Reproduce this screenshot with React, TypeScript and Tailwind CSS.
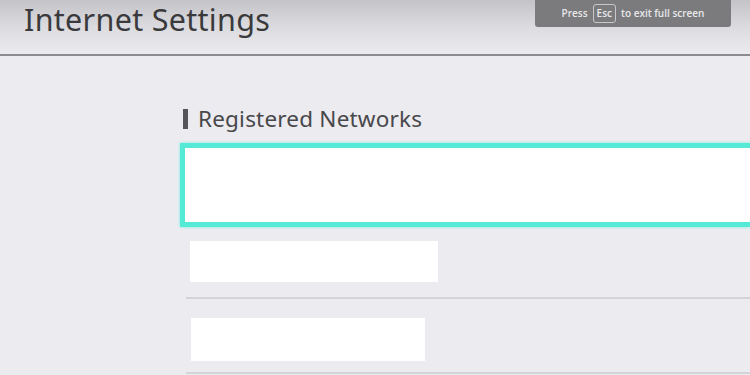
import React from "react";

export default function App() {
  return (
    <div className="relative w-[750px] h-[375px] overflow-hidden bg-[#ecebf0]" style={{ fontFamily: '"Open Sans", "Noto Sans", sans-serif' }}>
      <div className="h-[54px] bg-gradient-to-b from-[#c4c4c8] via-[#dcdce0] to-[#ebebee] flex items-start pl-[24px]">
        <h1 className="text-[30.5px] leading-[38px] text-[#3a3a3c] tracking-[0.3px]" style={{ fontFamily: '"Noto Sans", "Open Sans", sans-serif' }}>Internet Settings</h1>
      </div>
      <div className="h-[2px] bg-[#8c8c90]" />
      <div className="absolute left-[535px] top-0 w-[196px] h-[27px] bg-[#7b7b7e] rounded-b-[3px] flex items-center justify-center gap-[5px] text-[#e8e8ea] text-[10px] font-semibold">
        <span>Press</span>
        <span className="border border-[#c8c8ca] rounded-[3px] px-[3px] h-[19px] flex items-center">Esc</span>
        <span>to exit full screen</span>
      </div>
      <div className="pl-[180px] pt-[51px]">
        <div className="flex items-center h-[24px] ml-[3px]">
          <div className="w-[5px] h-[20px] bg-[#555558]" />
          <span className="ml-[10px] text-[22.5px] text-[#48484b] leading-none tracking-[0.2px]" style={{ fontFamily: '"Noto Sans", "Open Sans", sans-serif' }}>Registered Networks</span>
        </div>
        <div className="mt-[12px] h-[84px] border-[5px] border-r-0 border-[#55ead6] bg-white shadow-[0_0_3px_#7ff0e0]" />
        <div className="ml-[6px] mt-[14px] h-[58px] border-b-[2px] border-[#d3d3d8] pl-[4px]">
          <div className="w-[248px] h-[41px] bg-white" />
        </div>
        <div className="ml-[6px] mt-[19px] h-[56px] border-b-[2px] border-[#d3d3d8] pl-[5px]">
          <div className="w-[234px] h-[43px] bg-white" />
        </div>
      </div>
    </div>
  );
}
